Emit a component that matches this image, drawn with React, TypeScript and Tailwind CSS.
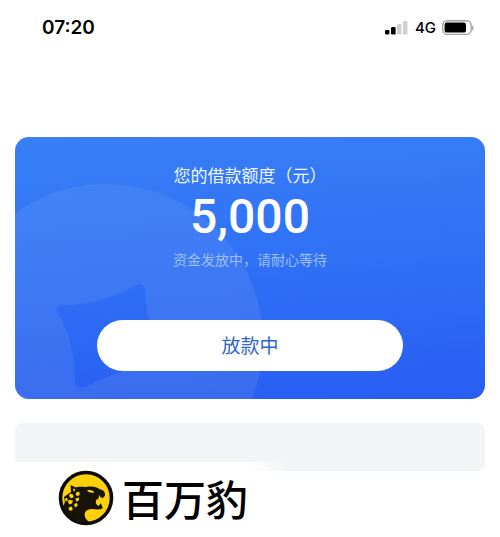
const SignalIcon = () => (
  <svg className="h-4 w-6" viewBox="0 0 24 16" aria-hidden="true">
    <rect x="0" y="10" width="4.4" height="4.5" rx="1.2" fill="#000" />
    <rect x="6" y="7" width="4.6" height="7.5" rx="1.2" fill="#000" />
    <rect x="12" y="4" width="4.4" height="10.5" rx="1.2" fill="#cfcfcf" />
    <rect x="18" y="1" width="4.4" height="13.5" rx="1.2" fill="#cfcfcf" />
  </svg>
)

const BatteryIcon = () => (
  <svg className="h-4 w-8" viewBox="0 0 32 16" aria-hidden="true">
    <rect x="0.8" y="0.8" width="28.4" height="13.6" rx="4.5" fill="#fff" stroke="#a3a3a3" strokeWidth="1.4" />
    <rect x="2.6" y="2.6" width="21.4" height="10" rx="2.2" fill="#000" />
    <path d="M30.3 5.2c1.6.8 1.6 4.4 0 5.2z" fill="#8a8a8a" />
  </svg>
)

const CardPattern = () => (
  <svg className="absolute top-0 left-0" width="262" height="262" viewBox="0 0 262 262" aria-hidden="true">
    <defs>
      <linearGradient id="coin" x1="0" y1="0" x2="0" y2="1">
        <stop offset="0" stopColor="#fff" stopOpacity="0.06" />
        <stop offset="1" stopColor="#a8a8b8" stopOpacity="0.14" />
      </linearGradient>
    </defs>
    <path
      fill="url(#coin)"
      fillRule="evenodd"
      d="M-66 204a157 157 0 1 1 314 0a157 157 0 1 1-314 0Z
         M48 168C75 168 99 161 121 148C126 146 129 148 130 152C131 175 136 200 146 220C148 224 146 227 142 227C115 230 93 239 70 250C65 252 61 250 60 245C60 219 54 193 42 175C40 171 43 168 48 168Z"
    />
  </svg>
)

const LeopardLogo = () => (
  <svg className="h-14 w-14" viewBox="0 0 56 56" aria-hidden="true">
    <circle cx="28" cy="28" r="25.5" fill="#fdd108" stroke="#0b0a08" strokeWidth="3.6" />
    <path
      fill="#17120a"
      d="M12.6 15L18 17.4C21 16.4 25 17 28 17C34 16 38 16.5 42 19.2C45.6 20 47.4 22 47 25.5L45 28L42.5 27.2L41.4 25L40.4 28.6L38 30.2C37.4 33 38.4 35 40.5 36L43 33.2L44.7 38C42.5 40.2 38 39.3 34 39C27 39.4 25 44 28 49L31 52C20 55 9 48 5 37L7 32L6 27L10 24L13 22Z"
    />
    <path fill="#fdd108" d="M29 20.5C32 19.6 34.5 20 36.3 22.4C33.5 23.1 31 22.7 29 20.5Z" />
    <g fill="#fdd108">
      <path d="M15 18.4l2.6 1-1.8 2.6z" />
      <path d="M18 22.6l3-1.2 1 2.8-2.2 2-2-1.2z" />
      <path d="M12 23.6l3 1 .6 2.8-2.8.8-1.8-2.4z" />
      <path d="M17.4 28.4l3.6-1v2.8l-2.8 1.6z" />
      <path d="M11 29.8l4 .8-1 3-2.6.8-1.6-2.4z" />
      <path d="M16 34l3-1 .8 2.8-2.8 1.6z" />
      <path d="M10.6 37.4l3.2-1 1 3-2 1.6-2.2-1.6z" />
      <path d="M6.8 28.8l2.2-1 1 2.6-2.2 1z" />
    </g>
  </svg>
)

const StatusBar = () => (
  <header className="flex h-14 items-center justify-between pr-[26px] pl-[42px] text-black">
    <span className="font-['Inter',sans-serif] text-[19px] leading-6 font-semibold">07:20</span>
    <div className="flex items-center gap-1.5">
      <SignalIcon />
      <span className="font-['Inter',sans-serif] text-[15px] leading-6 font-medium">4G</span>
      <BatteryIcon />
    </div>
  </header>
)

const LoanCard = () => (
  <section className="relative flex flex-col items-center overflow-hidden rounded-[14px] bg-linear-[176deg,#397ff7,#2f70f5_50%,#285df2] pt-6 pb-7">
    <CardPattern />
    <h1 className="relative text-[17px] leading-7 text-[#eef6ff]">您的借款额度（元）</h1>
    <p className="relative font-['Roboto',sans-serif] text-5xl leading-[56px] font-medium text-white">5,000</p>
    <p className="relative text-[14px] leading-7 text-[#9dbffa]">资金发放中，请耐心等待</p>
    <button
      type="button"
      className="relative mt-[47px] h-[51px] w-[65%] rounded-full bg-white text-[19px] text-[#2f65c9]"
    >
      放款中
    </button>
  </section>
)

const App = () => {
  return (
    <div className="min-h-screen bg-white font-['Noto_Sans_CJK_SC',sans-serif]">
      <StatusBar />
      <main className="px-[15px] pt-[81px]">
        <LoanCard />
        <div className="mt-6 h-12 rounded-lg bg-[#f3f4f6]" />
      </main>
      <footer className="relative -mt-[9px] w-72 bg-linear-to-r from-white from-85% to-transparent pt-2 pb-3 pl-[58px]">
        <div className="flex items-center gap-2">
          <LeopardLogo />
          <span className="text-[42px] leading-[52px] font-medium whitespace-nowrap text-black">百万豹</span>
        </div>
      </footer>
    </div>
  )
}

export default App
